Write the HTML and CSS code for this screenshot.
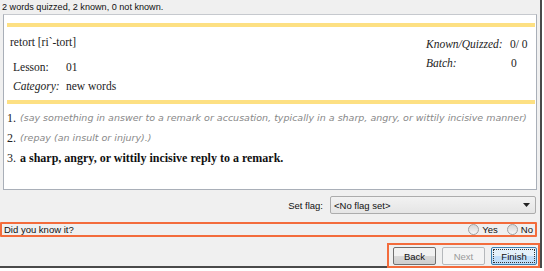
FILE: index.html
```html
<!DOCTYPE html>
<html lang="en">
<head>
  <meta charset="UTF-8">
  <title>Quiz</title>
  <link rel="stylesheet" href="styles.css">
</head>
<body>
  <div class="window">
    <div class="status">2 words quizzed, 2 known, 0 not known.</div>

    <div class="panel">
      <div class="bar"></div>
      <div class="head">
        <div class="word-info">
          <div class="word">retort [ri`-tort]</div>
          <div class="meta">
            <span class="key">Lesson:</span><span>01</span>
            <span class="key italic">Category:</span><span>new words</span>
          </div>
        </div>
        <div class="stats">
          <span class="key italic">Known/Quizzed:</span><span>0/ 0</span>
          <span class="key italic">Batch:</span><span class="pad">0</span>
        </div>
      </div>
      <div class="bar"></div>
      <ol class="defs">
        <li><span class="num">1.</span><span class="hint">(say something in answer to a remark or accusation, typically in a sharp, angry, or wittily incisive manner)</span></li>
        <li><span class="num">2.</span><span class="hint">(repay (an insult or injury).)</span></li>
        <li><span class="num">3.</span><span class="answer">a sharp, angry, or wittily incisive reply to a remark.</span></li>
      </ol>
    </div>

    <div class="flag-row">
      <label class="flag-label">Set flag:</label>
      <div class="combo">
        <span>&lt;No flag set&gt;</span>
        <svg width="7" height="4" viewBox="0 0 7 4"><path d="M0 0h7L3.5 4z" fill="#222"/></svg>
      </div>
    </div>

    <div class="know-row">
      <span>Did you know it?</span>
      <div class="radios">
        <span class="radio"><i></i>Yes</span>
        <span class="radio"><i></i>No</span>
      </div>
    </div>

    <div class="btn-row">
      <div class="btn-box">
        <button class="btn">Back</button>
        <button class="btn" disabled>Next</button>
        <button class="btn default">Finish</button>
      </div>
    </div>
  </div>
</body>
</html>
```

FILE: styles.css
```css
/* Page */
body {
  margin: 0;
  background: #fff;
  font-family: 'Liberation Sans', Arial, sans-serif;
  font-size: 9.5px;
  color: #111;
}

.window {
  width: 540px;
  height: 266px;
  background: #f0f0f0;
  border-right: 2px solid #4a4a4a;
  border-bottom: 2px solid #4a4a4a;
  display: flex;
  flex-direction: column;
}

.window > * {
  flex-shrink: 0;
}

.status {
  height: 14px;
  line-height: 15px;
  padding-left: 2px;
  font-size: 9.1px;
}

/* Word card */
.panel {
  margin: 0 3px 0 3px;
  height: 166px;
  background: #fff;
  border: 1px solid #a9afb8;
  border-top-color: #c6c9ce;
  padding: 8px 1px 0 3px;
  font-family: 'Liberation Serif', 'Times New Roman', serif;
  font-size: 11.5px;
  color: #222;
}

.bar {
  height: 4px;
  background: #fde083;
}

.head {
  display: flex;
  justify-content: space-between;
  align-items: flex-start;
  height: 73px;
}

.word {
  margin-top: 7px;
  padding-left: 3px;
  line-height: 16px;
}

.meta {
  display: grid;
  grid-template-columns: 53px auto;
  row-gap: 3px;
  margin-top: 9px;
  padding-left: 6px;
  line-height: 16px;
}

.stats {
  display: grid;
  grid-template-columns: 84px 25px;
  row-gap: 3px;
  margin-top: 9px;
  line-height: 16px;
}

.stats .pad {
  padding-left: 1px;
}

.italic {
  font-style: italic;
}

.defs {
  list-style: none;
  margin: 4px 0 0;
  padding: 0;
}

.defs li {
  display: flex;
  line-height: 20px;
  white-space: nowrap;
}

.num {
  width: 13px;
  font-size: 12px;
}

.hint {
  font-family: 'DejaVu Sans', Verdana, sans-serif;
  font-style: italic;
  font-size: 9.5px;
  color: #888;
}

.answer {
  font-weight: bold;
  font-size: 12px;
  color: #111;
}

/* Flag chooser */
.flag-row {
  display: flex;
  justify-content: flex-end;
  align-items: center;
  gap: 7px;
  margin: 6px 4px 0 0;
  height: 18px;
}

.combo {
  width: 196px;
  height: 16px;
  border: 1px solid #acacac;
  border-radius: 2px;
  background: linear-gradient(#f2f2f2, #e5e5e5);
  display: flex;
  align-items: center;
  justify-content: space-between;
  padding: 0 5px 0 3px;
}

/* Did you know it */
.know-row {
  margin: 8px 3px 0 0;
  height: 11px;
  border: 2px solid #f36c3c;
  border-radius: 1px;
  display: flex;
  align-items: center;
  justify-content: space-between;
  padding: 0 2px 0 2px;
}

.radios {
  display: flex;
  gap: 9px;
}

.radio {
  display: flex;
  align-items: center;
  gap: 3px;
}

.radio i {
  width: 9px;
  height: 9px;
  border: 1px solid #a0a0a0;
  border-radius: 50%;
  background: linear-gradient(#d6d6d6, #f6f6f6);
}

/* Buttons */
.btn-row {
  display: flex;
  justify-content: flex-end;
  margin-top: 6px;
}

.btn-box {
  display: flex;
  gap: 6px;
  border: 2px solid #f36c3c;
  padding: 2px 1px 0 4px;
  height: 19px;
}

.btn {
  width: 43px;
  height: 18px;
  padding: 0;
  font-family: 'Liberation Sans', Arial, sans-serif;
  font-size: 9.5px;
  color: #111;
  border: 1px solid #707070;
  border-radius: 2px;
  background: linear-gradient(#f2f2f2 50%, #d9d9d9 51%, #cfcfcf);
}

.btn:disabled {
  color: #9a9a9a;
  border-color: #b5b8bb;
  background: #f4f4f4;
}

.btn.default {
  width: 46px;
  border-color: #3c7fb1;
  background: linear-gradient(#e5f1fb 50%, #c4e0fc 51%, #bcdcf8);
  outline: 1px dotted #333;
  outline-offset: -3px;
}
```
